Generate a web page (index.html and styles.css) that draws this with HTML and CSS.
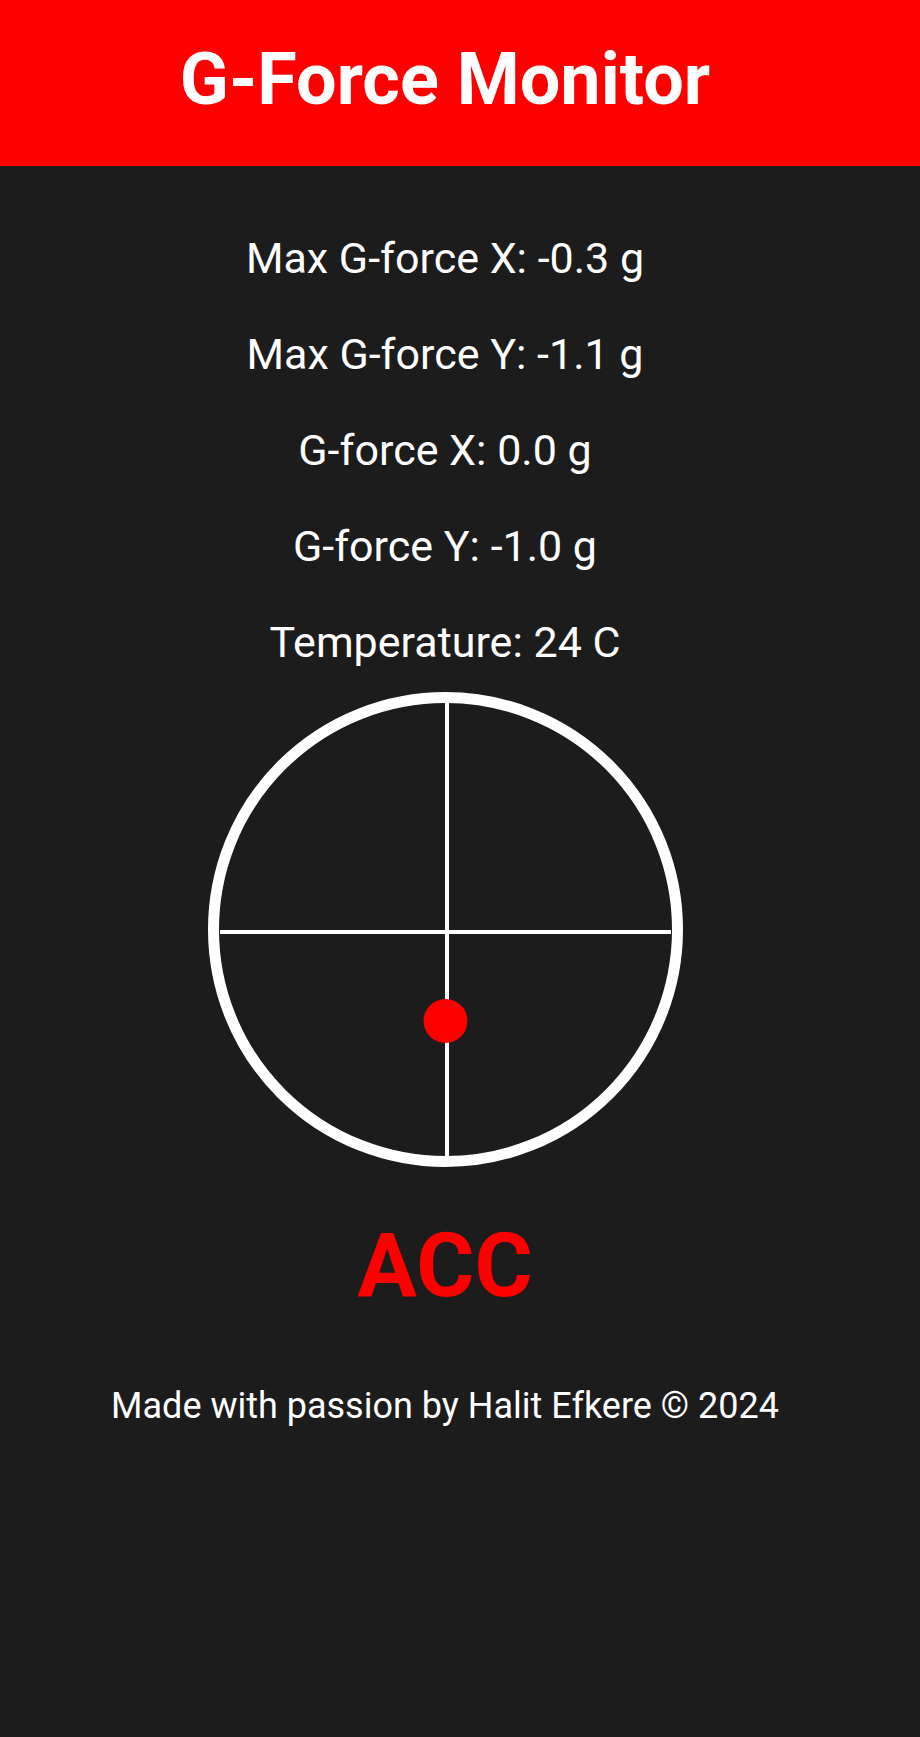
FILE: index.html
```html
<!DOCTYPE html>
<html lang="en">
<head>
<meta charset="utf-8">
<title>G-Force Monitor</title>
<link rel="stylesheet" href="styles.css">
</head>
<body>
<header class="top-bar">
  <h1 class="title">G-Force Monitor</h1>
</header>
<main class="content">
  <section class="stats">
    <p class="stat">Max G-force X: -0.3 g</p>
    <p class="stat">Max G-force Y: -1.1 g</p>
    <p class="stat">G-force X: 0.0 g</p>
    <p class="stat">G-force Y: -1.0 g</p>
    <p class="stat">Temperature: 24 C</p>
  </section>
  <div class="gauge">
    <svg width="475" height="475" viewBox="0 0 475 475">
      <line x1="12" y1="240" x2="463" y2="240" stroke="#fff" stroke-width="4"/>
      <line x1="239" y1="11" x2="239" y2="464" stroke="#fff" stroke-width="4"/>
      <circle cx="237.5" cy="237.5" r="232" fill="none" stroke="#fff" stroke-width="11"/>
      <circle cx="237.5" cy="329" r="22" fill="#ff0000"/>
    </svg>
  </div>
  <div class="mode">ACC</div>
  <footer class="credit">Made with passion by Halit Efkere © 2024</footer>
</main>
</body>
</html>
```
FILE: styles.css
```css
html, body {
  margin: 0;
  padding: 0;
}
body {
  background: #1c1c1c;
  color: #ffffff;
  font-family: Roboto, "Liberation Sans", sans-serif;
  min-height: 1737px;
}
.top-bar {
  background: #ff0000;
  height: 166px;
  box-sizing: border-box;
  padding: 44px 30px 0 0;
  text-align: center;
}
.title {
  margin: 0;
  font-size: 72px;
  line-height: 72px;
  font-weight: 700;
  color: #ffffff;
}
.content {
  padding-right: 30px;
  display: flex;
  flex-direction: column;
  align-items: center;
  text-align: center;
}
.stats {
  display: flex;
  flex-direction: column;
  gap: 44px;
  margin-top: 66px;
}
.stat {
  margin: 0;
  font-size: 43px;
  line-height: 52px;
}
.gauge {
  margin-top: 24px;
  width: 475px;
  height: 475px;
}
.gauge svg {
  display: block;
}
.mode {
  margin-top: 54px;
  font-size: 89px;
  line-height: 89px;
  font-weight: 700;
  color: #ff0000;
}
.credit {
  margin-top: 75px;
  font-size: 36px;
  line-height: 42px;
}
```
